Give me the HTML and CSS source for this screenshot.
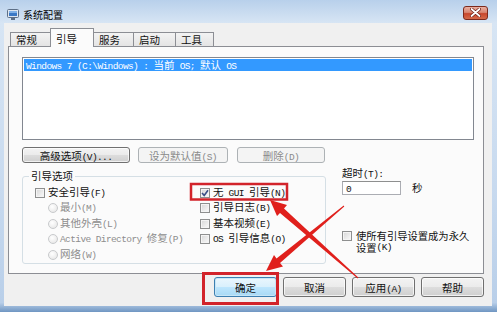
FILE: index.html
```html
<!DOCTYPE html>
<html lang="zh-CN">
<head>
    <meta charset="UTF-8">
    <meta name="viewport" content="width=device-width, initial-scale=1.0">
    <title>系统配置</title>
    <link rel="stylesheet" href="styles.css">
</head>
<body>
    <div class="window">
        <div class="titlebar">
            <svg class="app-icon" width="12" height="11" viewBox="0 0 12 11">
                <rect x="0.5" y="0.5" width="11" height="8" rx="1" fill="#dfe6ef" stroke="#5d6f86"/>
                <rect x="2" y="2" width="8" height="5" fill="#3b78c4"/>
                <rect x="2" y="2" width="8" height="2" fill="#7fb0e6"/>
                <rect x="4" y="9" width="4" height="2" fill="#5d6f86"/>
            </svg>
            <span class="title">系统配置</span>
            <div class="close">
                <svg width="11" height="9" viewBox="0 0 11 9">
                    <path d="M1.5 1 L9.5 8 M9.5 1 L1.5 8" stroke="#6b1b12" stroke-width="3.2" stroke-linecap="round"/>
                    <path d="M1.5 1 L9.5 8 M9.5 1 L1.5 8" stroke="#ffffff" stroke-width="1.8" stroke-linecap="round"/>
                </svg>
            </div>
        </div>

        <div class="client">
            <div class="tabs">
                <div class="tab tab-general">常规</div>
                <div class="tab tab-boot active">引导</div>
                <div class="tab tab-services">服务</div>
                <div class="tab tab-startup">启动</div>
                <div class="tab tab-tools">工具</div>
            </div>

            <div class="panel">
                <div class="os-list">
                    <div class="os-item selected"><span class="en">Windows 7 (C:\Windows) : </span>当前<span class="en"> OS; </span>默认<span class="en"> OS</span></div>
                </div>

                <div class="panel-buttons">
                    <button class="btn btn-advanced">高级选项<span class="en">(V)...</span></button>
                    <button class="btn btn-default" disabled>设为默认值<span class="en">(S)</span></button>
                    <button class="btn btn-delete" disabled>删除<span class="en">(D)</span></button>
                </div>

                <div class="boot-area">
                    <fieldset class="boot-options">
                        <legend>引导选项</legend>
                        <div class="option-cols">
                            <div class="option-col col-left">
                                <div class="row"><span class="chk"></span><span class="text">安全引导<span class="en">(F)</span></span></div>
                                <div class="row sub disabled"><span class="radio"></span><span class="text">最小<span class="en">(M)</span></span></div>
                                <div class="row sub disabled"><span class="radio"></span><span class="text">其他外壳<span class="en">(L)</span></span></div>
                                <div class="row sub disabled"><span class="radio"></span><span class="text"><span class="en">Active Directory </span>修复<span class="en">(P)</span></span></div>
                                <div class="row sub disabled"><span class="radio"></span><span class="text">网络<span class="en">(W)</span></span></div>
                            </div>
                            <div class="option-col">
                                <div class="row">
                                    <span class="chk checked">
                                        <svg width="8" height="8" viewBox="0 0 8 8"><path d="M1 4 L3.2 6.4 L7 1.2" fill="none" stroke="#3a4f86" stroke-width="1.6"/></svg>
                                    </span>
                                    <span class="text">无<span class="en"> GUI </span>引导<span class="en">(N)</span></span>
                                </div>
                                <div class="row"><span class="chk"></span><span class="text">引导日志<span class="en">(B)</span></span></div>
                                <div class="row"><span class="chk"></span><span class="text">基本视频<span class="en">(E)</span></span></div>
                                <div class="row"><span class="chk"></span><span class="text"><span class="en">OS </span>引导信息<span class="en">(O)</span></span></div>
                            </div>
                        </div>
                    </fieldset>

                    <div class="timeout-col">
                        <div class="timeout-label">超时<span class="en">(T):</span></div>
                        <div class="timeout-row">
                            <div class="input"><span class="en">0</span></div>
                            <span class="unit">秒</span>
                        </div>
                        <div class="row perm">
                            <span class="chk"></span>
                            <span class="perm-text">使所有引导设置成为永久设置<span class="en">(K)</span></span>
                        </div>
                    </div>
                </div>
            </div>

            <div class="dialog-buttons">
                <button class="btn btn-ok">确定</button>
                <button class="btn">取消</button>
                <button class="btn">应用<span class="en">(A)</span></button>
                <button class="btn">帮助</button>
            </div>
        </div>

        <!-- red annotation drawn over the dialog -->
        <svg class="marks" width="497" height="312" viewBox="0 0 497 312">
            <rect x="191" y="184" width="96" height="15.5" fill="none" stroke="#d2232a" stroke-width="2.5"/>
            <rect x="203.5" y="273.5" width="74" height="30" fill="none" stroke="#d2232a" stroke-width="3"/>
            <polygon fill="#e0201c" points="270,200 287,205 284,208.5 358.3,277.6 357.7,278.4 280,213 277,216"/>
            <polygon fill="#e0201c" points="266,271 283,266.5 280,263 344.3,206.4 343.7,205.6 276.5,258.5 274,255"/>
        </svg>
    </div>
</body>
</html>
```

FILE: styles.css
```css
* {
    box-sizing: border-box;
}
body {
    margin: 0;
    font-family: "Noto Sans CJK SC", sans-serif;
    font-size: 10.5px;
    color: #111111;
}
.en {
    font-family: "Liberation Mono", monospace;
    font-size: 9.5px;
    letter-spacing: -0.6px;
}
.window {
    position: relative;
    width: 497px;
    height: 312px;
    display: flex;
    flex-direction: column;
    background: linear-gradient(#b8d0eb 0, #d7e5f4 23px, #c8daef 60%, #b9cfe9 97%, #6f96c2 100%);
    overflow: hidden;
}
.titlebar {
    height: 23px;
    display: flex;
    align-items: center;
    padding: 5px 9px 0 7px;
}
.app-icon {
    display: block;
    margin-right: 4px;
}
.title {
    font-size: 10px;
    color: #000000;
    flex: 1;
}
.close {
    width: 25px;
    height: 14px;
    margin-top: -3px;
    border: 1px solid #7c2a1d;
    border-radius: 3px;
    background: linear-gradient(#eab0a2 0%, #d98671 45%, #c8472d 55%, #d56a4a 100%);
    display: flex;
    justify-content: center;
    align-items: center;
}
.close svg {
    display: block;
}
.client {
    flex: 1;
    margin: 0 5px 6px 4px;
    padding-top: 5px;
    background-color: #f0f0f0;
    display: flex;
    flex-direction: column;
}
.tabs {
    display: flex;
    align-items: flex-end;
    height: 18px;
    margin-left: 6px;
}
.tab {
    height: 14px;
    padding-left: 5px;
    display: flex;
    align-items: center;
    border: 1px solid #8c8e94;
    border-bottom: none;
    background: linear-gradient(#f3f3f3, #e4e4e4);
    margin-left: -1px;
}
.tab-general { width: 41px; margin-left: 0; }
.tab-boot { width: 44px; }
.tab-services { width: 41px; }
.tab-startup { width: 43px; }
.tab-tools { width: 39px; }
.tab.active {
    height: 19px;
    margin-bottom: -1px;
    background: #fbfbfb;
    position: relative;
    z-index: 1;
}
.panel {
    height: 228px;
    margin: 0 8px 0 4px;
    padding: 10px 0 0 13px;
    border: 1px solid #8c8e94;
    background-color: #fbfbfb;
}
.os-list {
    width: 452px;
    height: 83px;
    border: 1px solid #828790;
    background-color: #ffffff;
    padding: 1px;
}
.os-item {
    height: 12px;
    line-height: 12px;
    padding-left: 2px;
    white-space: pre;
}
.os-item.selected {
    background-color: #3399ff;
    color: #ffffff;
}
.btn {
    font-family: "Noto Sans CJK SC", sans-serif;
    font-size: 10.5px;
    color: #111111;
    padding: 0;
    border: 1px solid #707070;
    border-radius: 3px;
    background: linear-gradient(#f3f3f3 0%, #ebebeb 50%, #dddddd 51%, #cfcfcf 100%);
    box-shadow: inset 0 0 0 1px rgba(255, 255, 255, 0.7);
    white-space: nowrap;
}
.btn:disabled {
    color: #8a8a8a;
    border-color: #adb2b5;
    background: #f4f4f4;
    box-shadow: none;
}
.panel-buttons {
    display: flex;
    margin-top: 7px;
    height: 16px;
}
.btn-advanced { width: 108px; }
.btn-default { width: 90px; margin-left: 8px; }
.btn-delete { width: 88px; margin-left: 9px; }
.boot-area {
    display: flex;
    align-items: flex-start;
    margin-top: 4px;
}
.boot-options {
    width: 304px;
    margin: 3px 0 0 0;
    padding: 3px 0 0 12px;
    border: 1px solid #d5dfe5;
    border-radius: 3px;
}
.boot-options legend {
    margin-left: -6px;
    padding: 0 2px;
    line-height: 12px;
}
.option-cols {
    display: flex;
}
.option-col.col-left {
    width: 165px;
}
.row {
    display: flex;
    align-items: center;
    height: 15.5px;
}
.row .text {
    white-space: pre;
    line-height: 12px;
}
.row.sub {
    padding-left: 13px;
}
.row.disabled {
    color: #8d8d8d;
}
.chk {
    width: 10px;
    height: 10px;
    margin-right: 3px;
    border: 1px solid #8e8f8f;
    background: linear-gradient(135deg, #d6d6d6, #fbfbfb);
    box-shadow: inset 0 0 0 1px #f4f4f4;
    display: flex;
    justify-content: center;
    align-items: center;
    flex-shrink: 0;
}
.chk svg {
    display: block;
}
.radio {
    width: 10px;
    height: 10px;
    margin-right: 2px;
    border: 1px solid #c8cacc;
    border-radius: 50%;
    background: radial-gradient(circle at 40% 35%, #ffffff, #e3e3e3);
    flex-shrink: 0;
}
.timeout-col {
    margin-left: 16px;
}
.timeout-label {
    height: 12px;
    line-height: 12px;
}
.timeout-row {
    display: flex;
    align-items: center;
    height: 14px;
    margin-top: 2px;
}
.input {
    width: 59px;
    height: 14px;
    border: 1px solid #abadb3;
    border-top-color: #8e8f8f;
    background-color: #ffffff;
    padding-left: 3px;
    line-height: 12px;
}
.unit {
    margin-left: 11px;
    line-height: 12px;
}
.row.perm {
    height: auto;
    align-items: flex-start;
    margin-top: 35px;
}
.row.perm .chk {
    margin-top: 1px;
    margin-right: 4px;
}
.perm-text {
    width: 118px;
    font-size: 10.3px;
    line-height: 12px;
}
.perm-text .en {
    line-height: 12px;
    vertical-align: top;
}
.dialog-buttons {
    display: flex;
    justify-content: flex-end;
    gap: 6px;
    margin: 3px 8px 0 0;
}
.dialog-buttons .btn {
    width: 63px;
    height: 20px;
}
.btn-ok {
    border-color: #3c7fb1;
    background: linear-gradient(#eaf6fd 0%, #d9f0fc 50%, #bee6fd 51%, #a7d9f5 100%);
    box-shadow: inset 0 0 0 1px #c7e6f7;
}
.marks {
    position: absolute;
    top: 0;
    left: 0;
    pointer-events: none;
}
```
